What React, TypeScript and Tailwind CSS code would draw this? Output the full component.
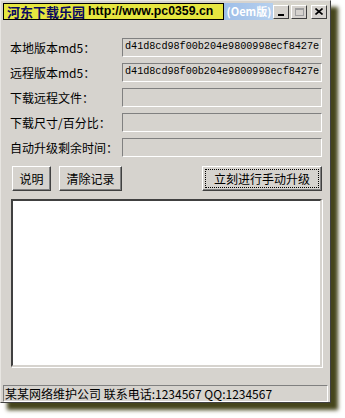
import React from 'react'

const font = { fontFamily: '"SimSun", "Noto Sans CJK SC", "Liberation Sans", sans-serif' }

function Field({ label, value }: { label: string; value?: string }) {
  return (
    <div className="flex items-center h-[19px]">
      <div className="w-[112px] text-[12px] leading-none text-black">{label}</div>
      <div className="flex-1 h-[19px] border border-t-[#808080] border-l-[#808080] border-b-white border-r-white bg-[#d6d3ce] flex items-center pl-[2px]">
        {value && (
          <span className="text-[10.2px] leading-none text-black tracking-[-0.05px]" style={{ fontFamily: '"Liberation Mono", monospace' }}>
            {value}
          </span>
        )}
      </div>
    </div>
  )
}

function Btn({ children, w, focus }: { children: React.ReactNode; w: string; focus?: boolean }) {
  return (
    <div className={`${w} h-[25px] bg-[#d6d3ce] border border-t-white border-l-white border-b-[#404040] border-r-[#404040] shadow-[inset_-1px_-1px_0_#808080] flex items-center justify-center p-[3px]`}>
      <div className={`w-full h-full flex items-center justify-center text-[12px] text-black ${focus ? 'outline outline-1 outline-dotted outline-black' : ''}`}>
        {children}
      </div>
    </div>
  )
}

function TitleBtn({ children }: { children: React.ReactNode }) {
  return (
    <div className="w-[16px] h-[14px] bg-[#d6d3ce] border border-t-white border-l-white border-b-[#404040] border-r-[#404040] flex items-center justify-center">
      {children}
    </div>
  )
}

export default function App() {
  return (
    <div className="w-[345px] h-[418px] bg-white relative overflow-hidden" style={font}>
      <div className="w-[331px] h-[403px] bg-[#d6d3ce] border border-t-[#e8e6e2] border-l-[#e8e6e2] border-b-[#404040] border-r-[#404040] shadow-[7px_7px_4px_#45451c] flex flex-col px-[2px] pt-[2px]">
        {/* title bar */}
        <div className="h-[17px] flex items-stretch">
          <div className="w-[223px] bg-[#e6e640] border border-black flex items-center pl-[3px] font-bold leading-none whitespace-nowrap">
            <span className="text-[13px] text-[#0a0a60]">河东下载乐园</span>
            <span className="text-[12.3px] text-black ml-[3px]" style={{ fontFamily: '"Liberation Sans", sans-serif' }}>
              http://www.pc0359.cn
            </span>
          </div>
          <div className="w-[50px] bg-gradient-to-r from-[#9ebee8] to-[#b6d0ee] flex items-center pl-[3px] text-[11px] font-bold text-white leading-none">
            (Oem版)
          </div>
          <div className="flex-1 flex items-center justify-end gap-[2px] pr-[1px] bg-[#d8d6cc]">
            <TitleBtn>
              <div className="w-[6px] h-[2px] bg-black mt-[6px]" />
            </TitleBtn>
            <TitleBtn>
              <div className="w-[9px] h-[8px] border border-t-2 border-[#a0a0a0]" />
            </TitleBtn>
            <div className="ml-[2px]">
              <TitleBtn>
                <svg width="8" height="7" viewBox="0 0 8 7">
                  <path d="M0.5 0.5 L7.5 6.5 M7.5 0.5 L0.5 6.5" stroke="black" strokeWidth="1.6" />
                </svg>
              </TitleBtn>
            </div>
          </div>
        </div>

        {/* fields */}
        <div className="flex flex-col gap-[6px] pl-[7px] pr-[6px] mt-[18px]">
          <Field label="本地版本md5：" value="d41d8cd98f00b204e9800998ecf8427e" />
          <Field label="远程版本md5：" value="d41d8cd98f00b204e9800998ecf8427e" />
          <Field label="下载远程文件：" />
          <Field label="下载尺寸/百分比：" />
          <Field label="自动升级剩余时间：" />
        </div>

        {/* buttons */}
        <div className="flex pl-[9px] pr-[6px] mt-[9px]">
          <Btn w="w-[39px]">说明</Btn>
          <div className="ml-[8px]">
            <Btn w="w-[63px]">清除记录</Btn>
          </div>
          <div className="ml-auto">
            <Btn w="w-[120px]" focus>立刻进行手动升级</Btn>
          </div>
        </div>

        {/* text area */}
        <div className="ml-[8px] mr-[6px] mt-[8px] h-[168px] bg-white border-2 border-t-[#404040] border-l-[#404040] border-b-[#d6d3ce] border-r-[#d6d3ce] shadow-[1px_1px_0_#fff]" />

        {/* status bar */}
        <div className="mt-auto h-[17px] border border-t-[#808080] border-l-[#808080] border-b-white border-r-white flex items-center pl-[1px] text-[12px] leading-none text-black whitespace-nowrap">
          某某网络维护公司 联系电话:1234567 QQ:1234567
        </div>
      </div>
    </div>
  )
}
